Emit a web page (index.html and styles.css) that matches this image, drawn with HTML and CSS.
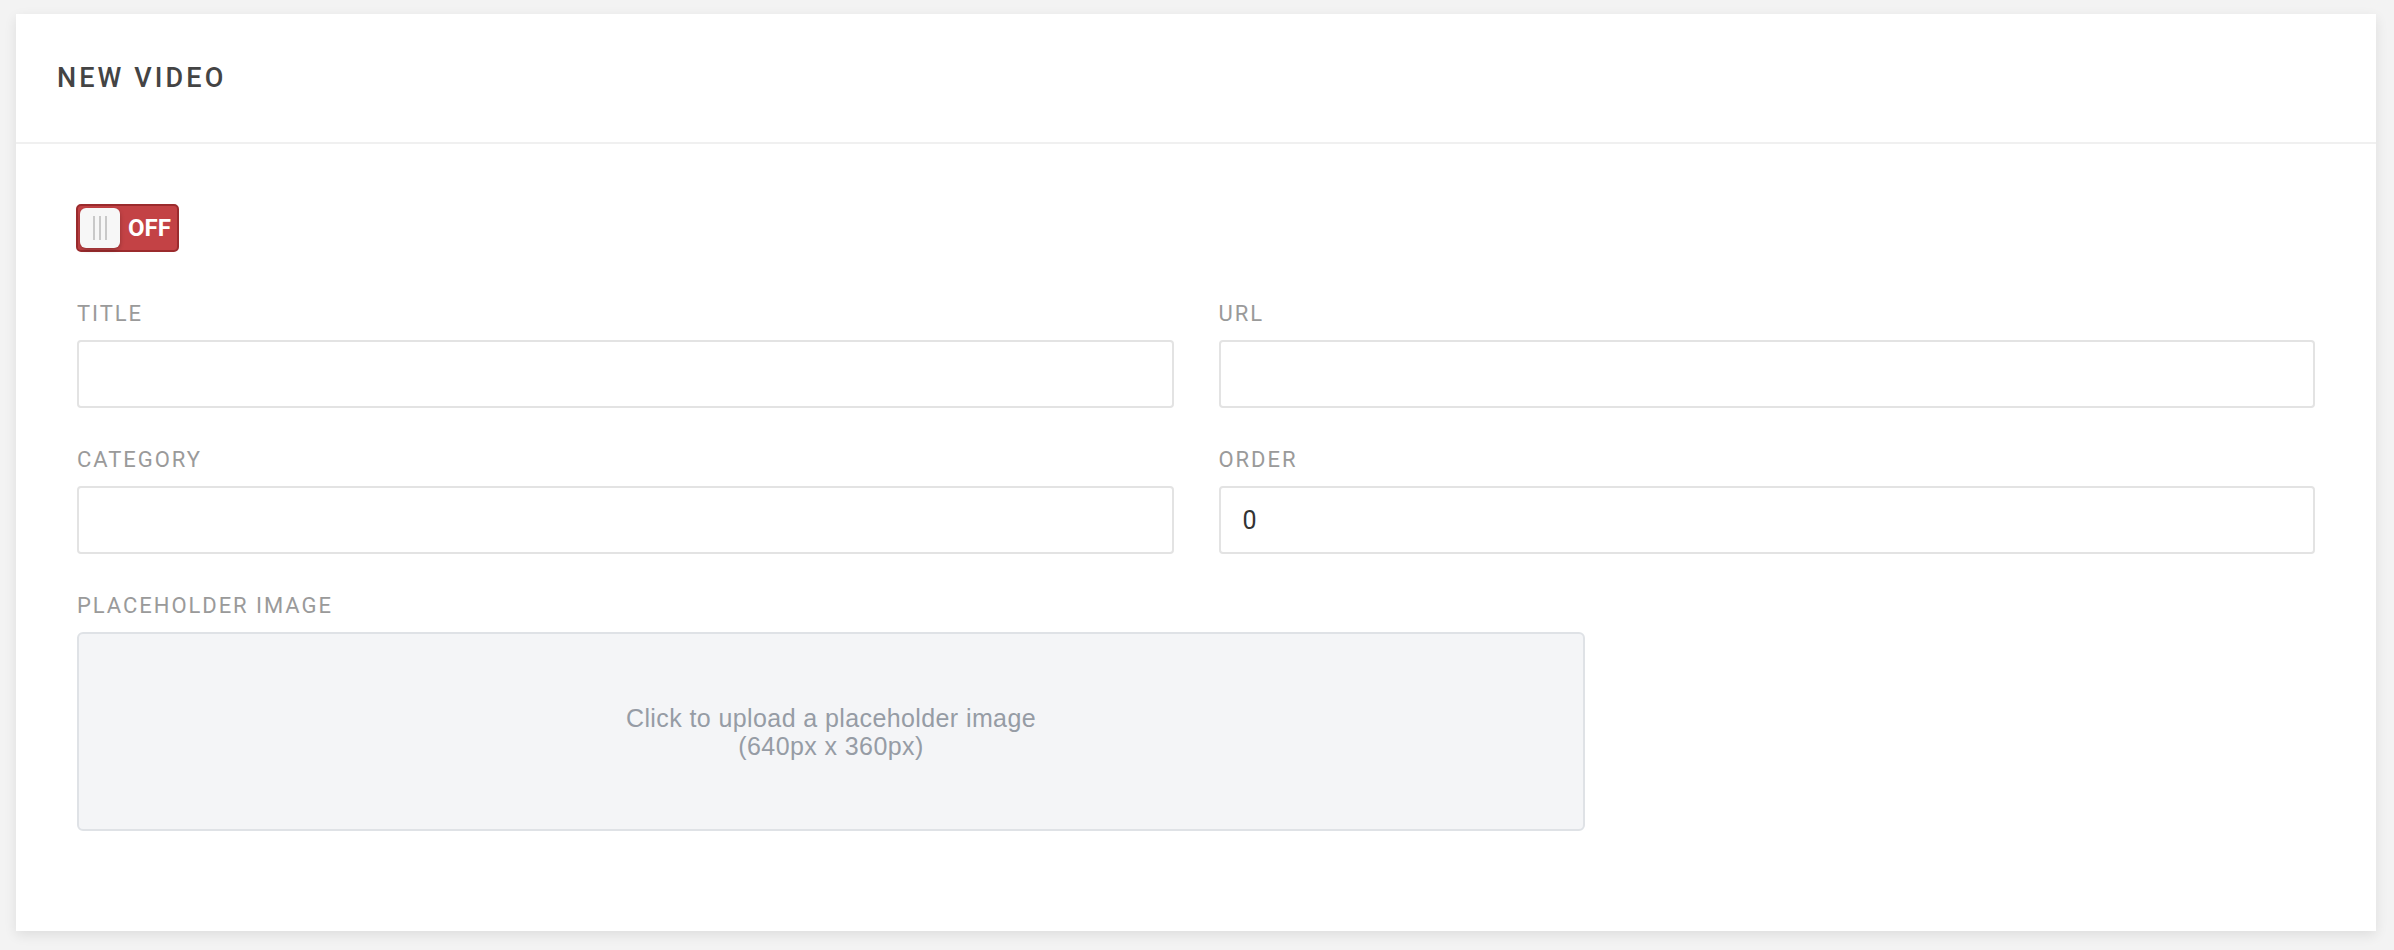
FILE: index.html
```html
<!DOCTYPE html>
<html lang="en">
  <head>
    <meta charset="UTF-8" />
    <meta name="viewport" content="width=device-width, initial-scale=1.0" />
    <title>New video</title>
    <link rel="stylesheet" href="styles.css">
  </head>
  <body>
    <div class="card">
      <div class="card-header">
        <h1>New video</h1>
      </div>

      <div class="card-body">
        <div class="toggle">
          <span class="toggle-knob">
            <i></i><i></i><i></i>
          </span>
          <span class="toggle-text">OFF</span>
        </div>

        <div class="form-grid">
          <label class="field">
            <span class="field-label">Title</span>
            <input type="text" class="field-input" />
          </label>
          <label class="field">
            <span class="field-label">URL</span>
            <input type="text" class="field-input" />
          </label>
          <label class="field">
            <span class="field-label">Category</span>
            <input type="text" class="field-input" />
          </label>
          <label class="field">
            <span class="field-label">Order</span>
            <input type="text" class="field-input" value="0" />
          </label>
        </div>

        <div class="field field-last">
          <span class="field-label">Placeholder image</span>
          <div class="upload">
            Click to upload a placeholder image<br />
            (640px x 360px)
          </div>
        </div>
      </div>
    </div>
  </body>
</html>
```

FILE: styles.css
```css
* {
  padding: 0;
  margin: 0;
  box-sizing: border-box;
}

body {
  background-color: #f3f3f3;
  font-family: Roboto, "Liberation Sans", sans-serif;
  padding: 14px 18px 18px 16px;
}

.card {
  background-color: #fff;
  box-shadow: 0 4px 12px rgba(0, 0, 0, 0.09);
}

.card-header {
  height: 130px;
  display: flex;
  align-items: center;
  padding-left: 41px;
  border-bottom: 2px solid #f0f0f0;
}

.card-header h1 {
  font-size: 27px;
  font-weight: 500;
  letter-spacing: 3.1px;
  text-transform: uppercase;
  color: #444;
}

.card-body {
  padding: 60px 61px 100px 61px;
}

/* on/off switch */
.toggle {
  width: 103px;
  height: 48px;
  display: flex;
  align-items: center;
  gap: 8px;
  padding-left: 2px;
  margin-left: -1px;
  border: 2px solid #9b2b2d;
  border-radius: 5px;
  background-color: #c34245;
  margin-bottom: 47px;
}

.toggle-knob {
  width: 40px;
  height: 40px;
  display: flex;
  justify-content: center;
  align-items: center;
  gap: 4px;
  border-radius: 6px;
  background-color: #f7f7f7;
  box-shadow: 0 2px 4px rgba(0, 0, 0, 0.25);
}

.toggle-knob i {
  width: 2px;
  height: 24px;
  background-color: #c9c9c9;
}

.toggle-text {
  font-size: 24px;
  font-weight: 700;
  color: #fff;
}

.form-grid {
  display: grid;
  grid-template-columns: 1fr 1fr;
  column-gap: 45px;
}

.field {
  display: flex;
  flex-direction: column;
  margin-bottom: 37px;
}

.field-last {
  margin-bottom: 0;
}

.field-label {
  font-size: 22px;
  line-height: 30px;
  letter-spacing: 1.95px;
  text-transform: uppercase;
  color: #9a9a9a;
  margin-bottom: 11px;
}

.field-input {
  height: 68px;
  padding: 0 22px;
  border: 2px solid #e3e3e3;
  border-radius: 4px;
  font-family: Roboto, sans-serif;
  font-size: 25px;
  color: #333;
  outline: none;
}

.upload {
  width: 1508px;
  height: 199px;
  display: flex;
  justify-content: center;
  align-items: center;
  border: 2px solid #dfe2e6;
  border-radius: 6px;
  background-color: #f4f5f7;
  font-family: "Liberation Sans", Arial, sans-serif;
  font-size: 25px;
  line-height: 28px;
  letter-spacing: 0.4px;
  text-align: center;
  color: #969ca5;
  cursor: pointer;
}
```
